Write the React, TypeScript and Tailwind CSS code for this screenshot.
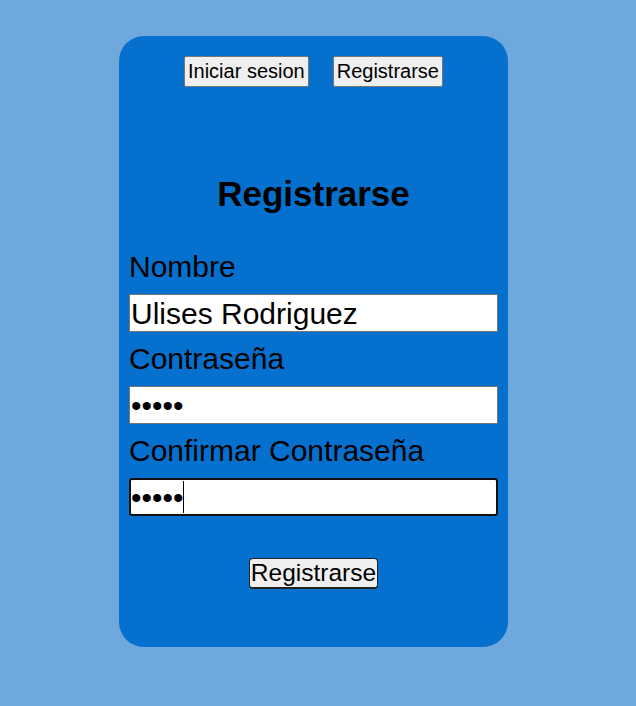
export default function App() {
  const font = { fontFamily: '"Liberation Sans", Arial, sans-serif' };
  return (
    <div style={font} className="min-h-[706px] w-full bg-[#6fa8dc] pt-[36px] pl-[119px] flex text-black">
      <div className="w-[389px] h-[611px] rounded-[25px] bg-[#0570cd] px-[10px] pt-[20px] flex flex-col">
        <div className="flex justify-center gap-[24px]">
          <button className="h-[31px] px-[3px] text-[20px] leading-[29px] bg-[#efefef] border border-[#767676] rounded-[2px] text-black">
            Iniciar sesion
          </button>
          <button className="h-[31px] px-[3px] text-[20px] leading-[29px] bg-[#efefef] border border-[#767676] rounded-[2px] text-black">
            Registrarse
          </button>
        </div>
        <h2 className="mt-[87px] text-center font-bold text-[35px] leading-[40px]">Registrarse</h2>
        <label className="mt-[36px] block text-[30px] leading-[34px]">Nombre</label>
        <input
          readOnly
          value="Ulises Rodriguez"
          className="mt-[10px] h-[38px] w-[369px] bg-white border border-[#767676] px-[1px] text-[30px] text-black outline-none"
        />
        <label className="mt-[10px] block text-[30px] leading-[34px]">Contraseña</label>
        <input
          readOnly
          type="password"
          value="12345"
          className="mt-[10px] h-[38px] w-[369px] bg-white border border-[#767676] px-[1px] text-[30px] text-black outline-none"
        />
        <label className="mt-[10px] block text-[30px] leading-[34px]">Confirmar Contraseña</label>
        <div className="relative mt-[10px] h-[38px] w-[369px]">
          <input
            readOnly
            type="password"
            value="12345"
            className="h-[38px] w-[369px] bg-white border-2 border-[#111] rounded-[3px] px-[0px] text-[30px] text-black outline-none"
          />
          <span className="absolute left-[54px] top-[3px] h-[32px] w-[1px] bg-black" />
        </div>
        <div className="mt-[42px] flex justify-center">
          <button className="h-[31px] px-[1px] text-[24.5px] leading-[28px] bg-[#efefef] border border-[#222] border-b-2 rounded-[4px] text-black">
            Registrarse
          </button>
        </div>
      </div>
    </div>
  );
}
